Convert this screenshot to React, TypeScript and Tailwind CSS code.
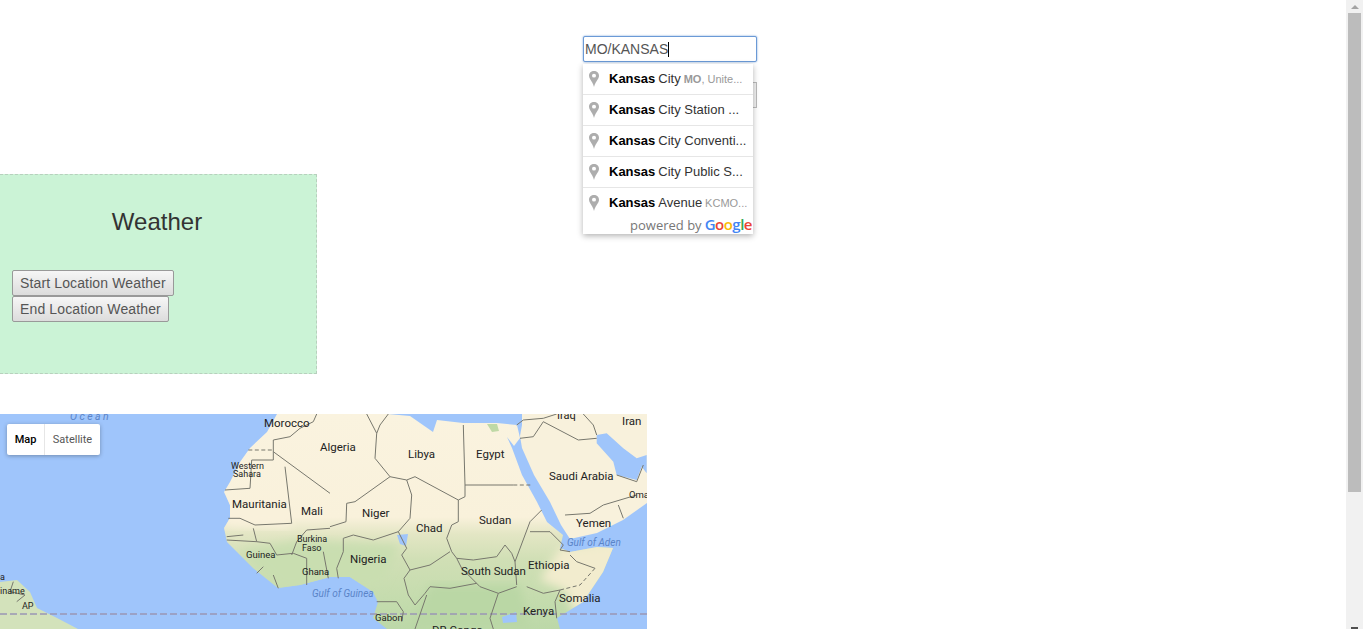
import React from "react";

const Z2 = (pts: number[][]) => pts.map(([x, y]) => `${(x / 3).toFixed(1)},${(y / 3 + 405).toFixed(1)}`).join(" ");
const Z3 = (pts: number[][]) => pts.map(([x, y]) => `${(x / 3 + 330).toFixed(1)},${(y / 3 + 405).toFixed(1)}`).join(" ");

const africa = "277,414 267,432 250,448 240,462 230,482 224,492 230,505 230,518 224,528 227,542 233,548 253,568 278,588 300,585 330,577 350,577 373,592 378,602 373,618 387,629 560,629 557,618 583,602 603,572 613,548 597,547 570,552 560,548 563,535 547,522 537,502 522,475 512,448 507,437 514,446 520,438 517,425 497,423 463,423 437,420 433,432 410,416 388,414";
const arabia = "522,414 647,414 647,503 623,520 597,533 570,539 561,525 550,502 534,475 522,448 520,436 522,425";
const gulf = Z3([[800, 90], [830, 85], [880, 130], [920, 160], [950, 150], [950, 205], [935, 185], [920, 225], [860, 210], [850, 170], [800, 115]]);
const samerica = "0,582 17,580 30,592 37,608 57,618 78,629 0,629";

const borders: string[] = [
  Z3([[400, 60], [405, 240], [405, 275], [385, 285], [255, 215], [230, 225], [180, 215], [135, 160], [140, 85], [110, 27]]),
  Z3([[405, 240], [550, 240]]),
  Z3([[175, 27], [150, 60], [140, 85]]),
  Z3([[230, 225], [245, 270], [240, 340], [205, 380], [230, 430], [215, 450], [240, 495]]),
  Z3([[385, 285], [385, 350], [365, 360], [350, 400], [365, 440], [380, 460], [430, 465], [500, 455], [525, 420], [545, 445], [555, 470], [600, 350], [635, 315]]),
  Z3([[180, 215], [75, 290], [50, 295], [48, 350], [0, 365]]),
  Z3([[205, 380], [130, 405], [70, 390], [40, 400], [40, 440], [20, 490], [25, 520]]),
  Z3([[555, 470], [560, 540]]),
  Z3([[600, 380], [660, 380], [700, 420], [690, 435], [720, 440]]),
  Z3([[795, 490], [740, 470], [720, 450]]),
  Z3([[590, 545], [640, 565], [690, 555], [675, 590], [680, 640]]),
  Z3([[380, 460], [395, 490], [450, 545], [505, 565], [560, 545]]),
  Z3([[240, 495], [300, 480], [360, 440]]),
  Z3([[240, 495], [222, 520], [235, 570], [255, 600], [285, 565], [300, 545], [360, 550], [440, 535]]),
  Z3([[505, 565], [480, 640], [490, 672]]),
  Z3([[290, 570], [255, 672]]),
  Z3([[140, 590], [200, 590], [220, 620], [215, 650]]),
  Z3([[570, 100], [610, 95], [640, 50], [745, 105], [800, 100]]),
  Z3([[560, 60], [580, 45], [640, 40], [680, 27]]),
  Z3([[760, 27], [790, 60], [800, 90]]),
  Z3([[705, 330], [780, 325], [820, 300], [920, 270]]),
  Z3([[865, 300], [880, 340]]),
  Z3([[860, 210], [920, 230], [940, 180]]),
  Z2([[950, 27], [940, 50], [900, 70], [870, 95], [820, 105], [820, 165], [755, 165], [750, 250], [675, 255]]),
  Z2([[820, 140], [990, 265]]),
  Z2([[855, 185], [875, 355], [765, 360], [720, 340], [685, 340]]),
  Z2([[680, 405], [770, 410], [810, 415], [830, 450], [880, 445], [920, 460], [920, 540]]),
  Z2([[770, 410], [760, 370]]),
  Z2([[790, 485], [770, 505]]),
  Z2([[820, 510], [835, 550]]),
  Z2([[875, 450], [890, 410], [920, 375], [990, 370]]),
  Z2([[970, 440], [985, 520]]),
  Z2([[680, 395], [730, 390]]),
  Z2([[40, 530], [30, 560], [75, 570], [50, 590]]),
];

const dashed: string[] = [
  Z2([[745, 135], [820, 135]]),
  Z3([[550, 240], [605, 240]]),
  Z3([[795, 490], [750, 540], [690, 555]]),
];

const labels: [string, number, number, number][] = [
  ["Morocco", 264, 427, 11.5],
  ["Algeria", 320, 451, 11.5],
  ["Libya", 408, 458, 11.5],
  ["Egypt", 476, 458, 11.5],
  ["Iraq", 557, 419, 11],
  ["Iran", 622, 425, 11.5],
  ["Saudi Arabia", 549, 480, 11.5],
  ["Oma", 629, 498, 9.5],
  ["Yemen", 576, 527, 11.5],
  ["Sudan", 479, 524, 11.5],
  ["Chad", 416, 532, 11.5],
  ["Niger", 362, 517, 11.5],
  ["Mali", 301, 515, 11.5],
  ["Mauritania", 232, 508, 11.5],
  ["Western", 231, 469, 9],
  ["Sahara", 233, 477, 9],
  ["Burkina", 297, 542, 9],
  ["Faso", 302, 551, 9],
  ["Guinea", 246, 558, 9.5],
  ["Ghana", 302, 575, 9.5],
  ["Nigeria", 350, 563, 11.5],
  ["South Sudan", 461, 575, 11.5],
  ["Ethiopia", 528, 569, 11.5],
  ["Somalia", 559, 602, 11.5],
  ["Kenya", 523, 615, 11.5],
  ["Gabon", 375, 621, 9.5],
  ["DR Congo", 432, 634, 11.5],
  ["iname", 0, 594, 9],
  ["AP", 22, 609, 9],
  ["a", 0, 580, 9],
];

function MapArt() {
  return (
    <svg viewBox="0 414 647 215" width={647} height={215} className="block">
      <defs>
        <linearGradient id="landfill" x1="0" y1="414" x2="0" y2="629" gradientUnits="userSpaceOnUse">
          <stop offset="0" stopColor="#faf3df" />
          <stop offset="0.48" stopColor="#f9f1db" />
          <stop offset="0.56" stopColor="#e3e6c4" />
          <stop offset="0.68" stopColor="#d0dfb5" />
          <stop offset="0.9" stopColor="#c2dbac" />
          <stop offset="1" stopColor="#bcd8a8" />
        </linearGradient>
        <filter id="soft" x="-5%" y="-5%" width="110%" height="110%">
          <feGaussianBlur stdDeviation="0.5" />
        </filter>
        <filter id="blurred" x="-10%" y="-10%" width="120%" height="120%">
          <feGaussianBlur stdDeviation="5" />
        </filter>
        <clipPath id="africaclip">
          <polygon points={africa} />
        </clipPath>
      </defs>
      <rect x="0" y="414" width="647" height="215" fill="#9fc5fb" />
      <g filter="url(#soft)">
        <polygon points={africa} fill="url(#landfill)" />
        <g clipPath="url(#africaclip)">
          <polygon points="560,548 620,540 620,610 575,615 565,590 540,580" fill="#f2ecce" filter="url(#blurred)" />
          <polygon points="225,500 290,500 290,528 225,525" fill="#f9f1db" filter="url(#blurred)" />
          <polygon points="430,585 520,585 530,629 410,629" fill="#bad7a5" filter="url(#blurred)" />
          <polygon points="240,550 300,540 400,545 380,585 280,590" fill="#c9deb0" filter="url(#blurred)" />
        </g>
        <polygon points={arabia} fill="#f8f1dc" />
        <polygon points={gulf} fill="#9fc5fb" />
        <polygon points="397,535 408,534 406,546 400,544" fill="#9fc5fb" />
        <polygon points="502,617 516,612 517,622 503,623" fill="#9fc5fb" />
        <polygon points={samerica} fill="#d3e2bb" />
        <polygon points="487,424 497,424 499,431 492,432" fill="#bfd9a6" />
      </g>
      <line x1="0" y1="614" x2="647" y2="614" stroke="#9b96b5" strokeWidth="1.4" strokeDasharray="7 3" />
      <g fill="none" stroke="#77776d" strokeWidth="1" strokeLinejoin="round" filter="url(#soft)">
        {borders.map((b, i) => (
          <polyline key={i} points={b} />
        ))}
        {dashed.map((b, i) => (
          <polyline key={i} points={b} strokeDasharray="4 2.5" />
        ))}
      </g>
      <g className="font-['Roboto',sans-serif]" fill="#222222">
        {labels.map(([t, x, y, s]) => (
          <text key={t} x={x} y={y} fontSize={s}>
            {t}
          </text>
        ))}
      </g>
      <g className="font-['Roboto',sans-serif] italic" fill="#5a84c8">
        <text x={567} y={545.5} fontSize={10}>Gulf of Aden</text>
        <text x={312} y={596.5} fontSize={10}>Gulf of Guinea</text>
        <text x={70} y={420} fontSize={10.5} letterSpacing={2.4}>Ocean</text>
      </g>
    </svg>
  );
}

function Pin() {
  return (
    <svg width="10" height="16" viewBox="0 0 10 17" preserveAspectRatio="none" className="shrink-0">
      <path
        fillRule="evenodd"
        d="M5 0C2.2 0 0 2.2 0 5c0 1.4.5 2.6 1.2 3.7C2.6 11 4.300 13.300 5 17c.7-3.700 2.400-6 3.800-8.300C9.500 7.600 10 6.400 10 5c0-2.800-2.200-5-5-5zm0 3a2 2 0 1 1 0 4 2 2 0 0 1 0-4z"
        fill="#adadad"
      />
    </svg>
  );
}

const suggestions: [string, string, string][] = [
  ["City", "MO", ", Unite..."],
  ["City Station ...", "", ""],
  ["City Conventi...", "", ""],
  ["City Public S...", "", ""],
  ["Avenue", "KCMO...", ""],
];

function Autocomplete() {
  return (
    <div className="absolute left-0 top-[28px] w-[170px] h-[170px] bg-white shadow-[0_2px_6px_rgba(0,0,0,0.3)] font-['Liberation_Sans',sans-serif] overflow-hidden">
      {suggestions.map(([rest, strong, sub], i) => (
        <div
          key={i}
          className={`flex items-center pl-[6px] whitespace-nowrap text-[13px] text-[#333] ${i > 0 ? "h-[31px] border-t border-[#e6e6e6]" : "h-[30px]"}`}
        >
          <Pin />
          <span className="ml-[10px] font-bold text-black">Kansas</span>
          <span className="ml-[3px]">{rest}</span>
          {strong && (
            <span className="ml-[3px] text-[11px] text-[#999]">
              <span className={i === 0 ? "font-bold" : ""}>{strong}</span>
              {sub}
            </span>
          )}
        </div>
      ))}
      <div className="flex items-baseline justify-end pr-[1px] h-[17px] -mt-px font-['Open_Sans',sans-serif] whitespace-nowrap">
        <span className="text-[13px] leading-[15px] text-[#777]">powered by</span>
        <span className="ml-[3px] text-[15px] font-semibold leading-[15px] tracking-[-0.5px]">
          <span className="text-[#4285f4]">G</span>
          <span className="text-[#ea4335]">o</span>
          <span className="text-[#fbbc05]">o</span>
          <span className="text-[#4285f4]">g</span>
          <span className="text-[#34a853]">l</span>
          <span className="text-[#ea4335]">e</span>
        </span>
      </div>
    </div>
  );
}

function Scrollbar() {
  return (
    <aside className="w-[17px] shrink-0 bg-[#f1f1f1] flex flex-col items-center">
      <div className="h-[13px] flex items-center justify-center">
        <div className="w-0 h-0 border-x-[4px] border-x-transparent border-b-[4px] border-b-[#a3a3a3]" />
      </div>
      <div className="w-[13px] h-[479px] bg-[#bcbcbc]" />
      <div className="flex-1" />
      <div className="h-[2px] w-[7px] bg-[#505050]" />
    </aside>
  );
}

export default function App() {
  return (
    <div className="flex h-[629px] overflow-hidden bg-white font-['Liberation_Sans',sans-serif]">
      <main className="flex-1 min-w-0 flex flex-col">
        <section className="h-[174px] pt-[36px] pl-[583px] flex flex-col">
          <div className="relative w-[174px] flex flex-col gap-[20px]">
            <div className="h-[26px] border border-[#6b9ad6] rounded-[2px] shadow-[0_0_2px_#6b9ad6] flex items-center pl-[1px] text-[14px] text-[#555] bg-white">
              MO/KANSAS
              <span className="w-px h-[15px] bg-black" />
            </div>
            <div className="h-[26px] border border-[#bbb] bg-[#f2f2f2]" />
            <Autocomplete />
          </div>
        </section>
        <section className="w-[317px] h-[200px] bg-[#cbf3d6] border-y border-r border-dashed border-[#b7d0bd] pl-[12px] flex flex-col">
          <h1 className="mt-[33px] pr-[14px] text-center text-[24px] leading-[27px] font-normal text-[#333]">Weather</h1>
          <div className="mt-[35px] flex flex-col items-start">
            {["Start Location Weather", "End Location Weather"].map((t) => (
              <button
                key={t}
                className="h-[26px] px-[7px] border border-[#999] rounded-[2px] bg-gradient-to-b from-[#f6f6f6] to-[#dcdcdc] text-[14px] tracking-[0.13px] text-[#555] whitespace-nowrap"
              >
                {t}
              </button>
            ))}
          </div>
        </section>
        <section className="relative mt-[40px] w-[647px] h-[215px] overflow-hidden">
          <MapArt />
          <div className="absolute left-[7px] top-[10px] h-[31px] flex bg-white rounded-[2px] shadow-[0_1px_4px_rgba(0,0,0,0.3)] font-['Roboto',sans-serif] text-[11px]">
            <div className="w-[38px] pt-px flex items-center justify-center font-medium text-black border-r border-[#e6e6e6]">Map</div>
            <div className="w-[55px] pt-px flex items-center justify-center text-[#565656]">Satellite</div>
          </div>
        </section>
      </main>
      <Scrollbar />
    </div>
  );
}
